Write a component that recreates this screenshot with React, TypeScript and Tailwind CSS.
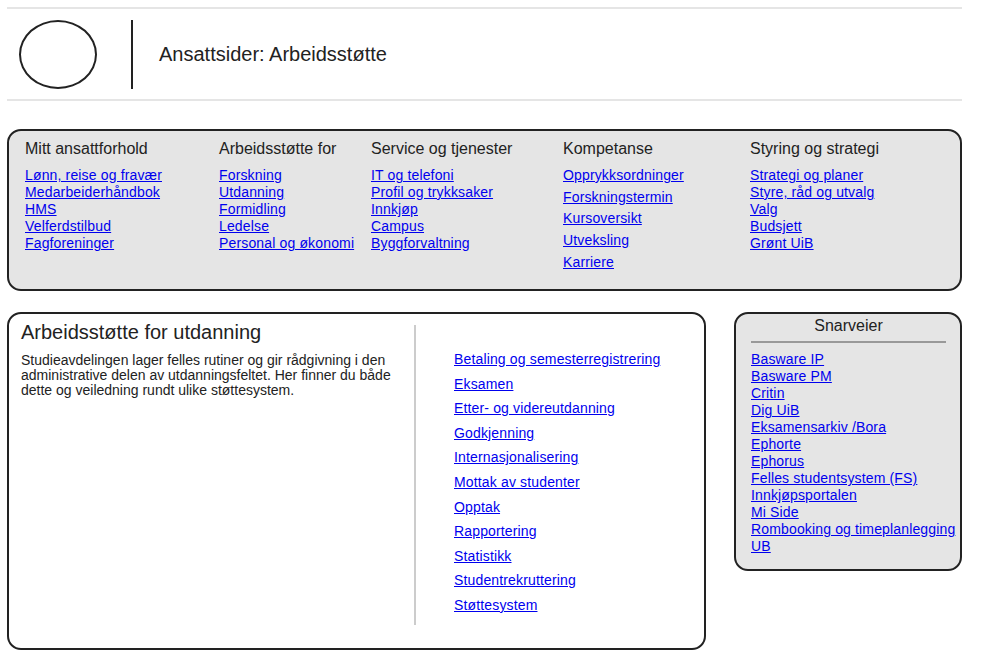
import React from "react";

const menu = [
    {
        title: "Mitt ansattforhold",
        width: "w-[194px]",
        gap: "gap-0",
        links: ["Lønn, reise og fravær", "Medarbeiderhåndbok", "HMS", "Velferdstilbud", "Fagforeninger"],
    },
    {
        title: "Arbeidsstøtte for",
        width: "w-[152px]",
        gap: "gap-0",
        links: ["Forskning", "Utdanning", "Formidling", "Ledelse", "Personal og økonomi"],
    },
    {
        title: "Service og tjenester",
        width: "w-[192px]",
        gap: "gap-0",
        links: ["IT og telefoni", "Profil og trykksaker", "Innkjøp", "Campus", "Byggforvaltning"],
    },
    {
        title: "Kompetanse",
        width: "w-[187px]",
        gap: "gap-[4.7px]",
        links: ["Opprykksordninger", "Forskningstermin", "Kursoversikt", "Utveksling", "Karriere"],
    },
    {
        title: "Styring og strategi",
        width: "w-[190px]",
        gap: "gap-0",
        links: ["Strategi og planer", "Styre, råd og utvalg", "Valg", "Budsjett", "Grønt UiB"],
    },
];

const utdanning = [
    "Betaling og semesterregistrering",
    "Eksamen",
    "Etter- og videreutdanning",
    "Godkjenning",
    "Internasjonalisering",
    "Mottak av studenter",
    "Opptak",
    "Rapportering",
    "Statistikk",
    "Studentrekruttering",
    "Støttesystem",
];

const snarveier = [
    "Basware IP",
    "Basware PM",
    "Critin",
    "Dig UiB",
    "Eksamensarkiv /Bora",
    "Ephorte",
    "Ephorus",
    "Felles studentsystem (FS)",
    "Innkjøpsportalen",
    "Mi Side",
    "Rombooking og timeplanlegging",
    "UB",
];

function Link({ children }: { children: React.ReactNode }) {
    return (
        <a href="#" className="text-[#0000ee] underline whitespace-nowrap tracking-[0.15px]">
            {children}
        </a>
    );
}

export default function App() {
    return (
        <div className="w-[1000px] h-[650px] bg-white px-[7px] pt-[7px] font-['Liberation_Sans',Arial,sans-serif] text-[#222]">
            <div className="w-[955px]">
                {/* Header */}
                <div className="h-[94px] border-y-2 border-[#e5e5e5] flex items-center">
                    <div className="ml-[12px] w-[78px] h-[69px] rounded-[50%] border-2 border-[#222]" />
                    <div className="ml-[34px] w-[2px] h-[69px] bg-[#222]" />
                    <div className="ml-[26px] text-[20px] leading-[23px]">Ansattsider: Arbeidsstøtte</div>
                </div>

                {/* Mega menu */}
                <div className="mt-[28px] h-[162px] border-2 border-[#222] rounded-[14px] bg-[#e5e5e5] pl-[16px] pt-[9px] flex">
                    {menu.map((col) => (
                        <div key={col.title} className={col.width}>
                            <div className="text-[16px] leading-[18px]">{col.title}</div>
                            <div className={`mt-[9px] flex flex-col items-start text-[14px] leading-[17px] ${col.gap}`}>
                                {col.links.map((l) => (
                                    <Link key={l}>{l}</Link>
                                ))}
                            </div>
                        </div>
                    ))}
                </div>

                <div className="mt-[21px] flex items-start">
                    {/* Main content */}
                    <div className="w-[699px] h-[338px] border-2 border-[#222] rounded-[14px] bg-white flex">
                        <div className="w-[405px] pl-[12px] pt-[7px]">
                            <h1 className="text-[20px] leading-[23px]">Arbeidsstøtte for utdanning</h1>
                            <p className="mt-[9px] text-[14px] leading-[15px] pr-[14px]">
                                Studieavdelingen lager felles rutiner og gir rådgivning i den administrative delen av
                                utdanningsfeltet. Her finner du både dette og veiledning rundt ulike støttesystem.
                            </p>
                        </div>
                        <div className="mt-[11px] w-[2px] h-[300px] bg-[#cccccc]" />
                        <div className="ml-[38px] pt-[37px] flex flex-col items-start gap-[7.6px] text-[14px] leading-[17px]">
                            {utdanning.map((l) => (
                                <Link key={l}>{l}</Link>
                            ))}
                        </div>
                    </div>

                    {/* Snarveier */}
                    <div className="ml-[28px] w-[228px] h-[259px] border-2 border-[#222] rounded-[14px] bg-[#e5e5e5] pl-[15px] pr-[14px] pt-[3px]">
                        <div className="text-center text-[16px] leading-[18px]">Snarveier</div>
                        <div className="mt-[6px] h-[2px] bg-[#999999]" />
                        <div className="mt-[8px] flex flex-col items-start text-[14px] leading-[17px]">
                            {snarveier.map((l) => (
                                <Link key={l}>{l}</Link>
                            ))}
                        </div>
                    </div>
                </div>
            </div>
        </div>
    );
}
